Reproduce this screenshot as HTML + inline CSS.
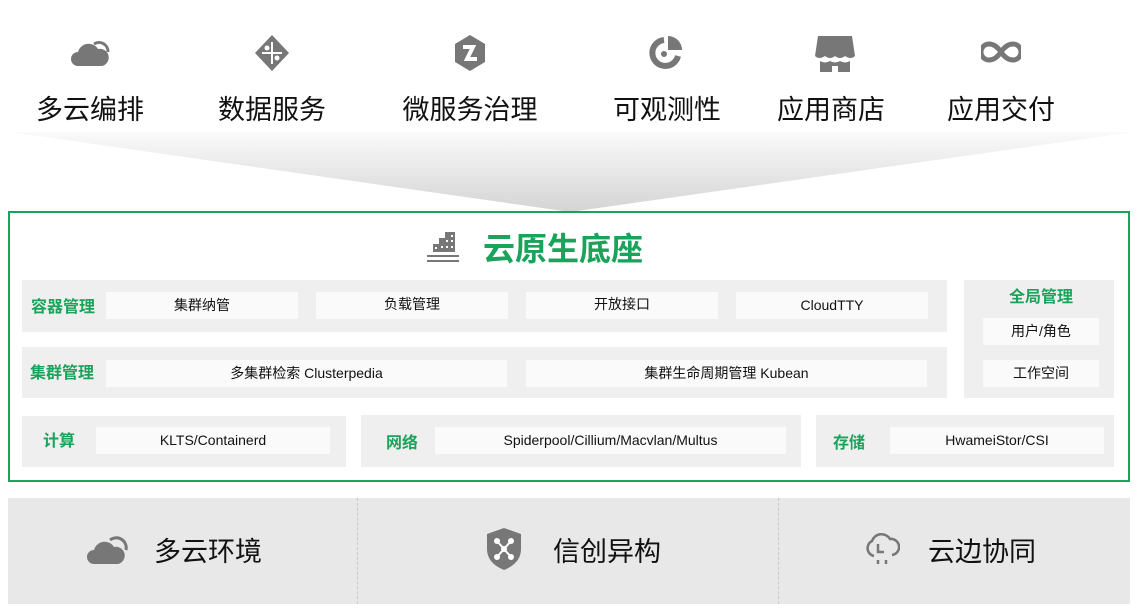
<!DOCTYPE html>
<html><head><meta charset="utf-8"><style>
*{margin:0;padding:0;box-sizing:border-box}
body{width:1143px;height:615px;background:#fff;position:relative;overflow:hidden;font-family:"Liberation Sans","Noto Sans CJK SC",sans-serif;color:#111}
.a{position:absolute}
.top{position:absolute;font-size:27px;top:88px;white-space:nowrap;transform:translateX(-50%)}
.ico{position:absolute;transform:translateX(-50%);top:34px}
.g{background:#efefef;position:absolute}
.c{background:#fafafa;position:absolute;font-size:14px;text-align:center;line-height:27px;height:27px;white-space:nowrap}
.gl{position:absolute;color:#1aa35a;font-weight:bold;font-size:16px;white-space:nowrap;line-height:20px}
.bt{position:absolute;font-size:27px;top:530px;white-space:nowrap}
</style></head><body>
<svg class="a" style="left:0;top:0" width="1143" height="215">
<defs><linearGradient id="f" x1="0" y1="0" x2="0" y2="1"><stop offset="0" stop-color="#fafafa"/><stop offset="1" stop-color="#d4d4d4"/></linearGradient></defs>
<polygon points="10,132 1133,132 570,212" fill="url(#f)"/>
</svg>
<svg class="ico" style="left:90px" width="40" height="36" viewBox="0 0 40 36"><path d="M8 32a7 7 0 0 1 0-14a11 11 0 0 1 20-3a8 8 0 0 1 4 17z" fill="#777"/><path d="M24 10a9 9 0 0 1 14 8" stroke="#777" stroke-width="3" fill="none"/></svg>
<svg class="ico" style="left:272px" width="36" height="38" viewBox="0 0 36 38"><path d="M18 1L35 19L18 37L1 19Z" fill="#777"/><path d="M18 8v22M8 19h20" stroke="#fff" stroke-width="2"/><circle cx="13" cy="14" r="2.5" fill="#fff"/><circle cx="23" cy="24" r="2.5" fill="#fff"/></svg>
<svg class="ico" style="left:470px" width="34" height="38" viewBox="0 0 34 38"><path d="M17 1L32 10V28L17 37L2 28V10Z" fill="#777"/><path d="M10 13h10l-6 12h10" stroke="#fff" stroke-width="4" fill="none"/></svg>
<svg class="ico" style="left:666px" width="36" height="38" viewBox="0 0 36 38"><path d="M16 6a13 13 0 1 0 14 16" stroke="#777" stroke-width="6" fill="none"/><path d="M20 2a14 14 0 0 1 14 14h-14z" fill="#777"/><circle cx="16" cy="20" r="3" fill="#777"/></svg>
<svg class="ico" style="left:835px" width="44" height="40" viewBox="0 0 44 40"><path d="M5 2h34l3 20q-4 4-10 0q-5 4-10 0q-5 4-10 0q-6 4-10 0z" fill="#777"/><path d="M7 27q5 3 10 0q5 3 10 0q5 3 10 0v11h-12v-6h-6v6h-12z" fill="#777"/></svg>
<svg class="ico" style="left:1001px;top:40px" width="40" height="24" viewBox="0 0 40 24"><path d="M20 12c-4-6-8-8-12-8a8 8 0 0 0 0 16c4 0 8-2 12-8s8-8 12-8a8 8 0 0 1 0 16c-4 0-8-2-12-8" stroke="#777" stroke-width="5" fill="none"/></svg>
<div class="top" style="left:90px">多云编排</div>
<div class="top" style="left:272px">数据服务</div>
<div class="top" style="left:470px">微服务治理</div>
<div class="top" style="left:667px">可观测性</div>
<div class="top" style="left:831px">应用商店</div>
<div class="top" style="left:1001px">应用交付</div>
<div class="a" style="left:8px;top:211px;width:1122px;height:271px;border:2px solid #1aa35a"></div>
<svg class="a" style="left:425px;top:230px" width="36" height="32" viewBox="0 0 36 32"><g fill="#777"><rect x="20" y="2" width="10" height="20"/><rect x="14" y="8" width="6" height="14"/><rect x="8" y="14" width="6" height="8"/></g><g fill="#fff"><rect x="16" y="16" width="2" height="2"/><rect x="21" y="16" width="2" height="2"/><rect x="26" y="16" width="2" height="2"/><rect x="21" y="10" width="2" height="2"/><rect x="26" y="10" width="2" height="2"/><rect x="26" y="5" width="2" height="2"/><rect x="10" y="17" width="2" height="2"/></g><rect x="2" y="25" width="32" height="2" fill="#777"/><rect x="2" y="30" width="32" height="2" fill="#777"/></svg>
<div class="a" style="left:483px;top:224px;font-size:32px;font-weight:bold;color:#1aa35a;white-space:nowrap">云原生底座</div>
<div class="g" style="left:22px;top:280px;width:925px;height:52px"></div>
<div class="gl" style="left:31px;top:298px">容器管理</div>
<div class="c" style="left:106px;top:292px;width:192px">集群纳管</div>
<div class="c" style="left:316px;top:292px;width:192px;line-height:24px">负载管理</div>
<div class="c" style="left:526px;top:292px;width:192px;line-height:24px">开放接口</div>
<div class="c" style="left:736px;top:292px;width:192px">CloudTTY</div>
<div class="g" style="left:22px;top:347px;width:925px;height:51px"></div>
<div class="gl" style="left:30px;top:364px">集群管理</div>
<div class="c" style="left:106px;top:360px;width:401px">多集群检索 Clusterpedia</div>
<div class="c" style="left:526px;top:360px;width:401px">集群生命周期管理 Kubean</div>
<div class="g" style="left:964px;top:280px;width:150px;height:118px"></div>
<div class="gl" style="left:1009px;top:288px">全局管理</div>
<div class="c" style="left:983px;top:318px;width:116px">用户/角色</div>
<div class="c" style="left:983px;top:360px;width:116px">工作空间</div>
<div class="g" style="left:22px;top:416px;width:324px;height:51px"></div>
<div class="gl" style="left:43px;top:432px">计算</div>
<div class="c" style="left:96px;top:427px;width:234px">KLTS/Containerd</div>
<div class="g" style="left:361px;top:415px;width:440px;height:52px"></div>
<div class="gl" style="left:386px;top:434px">网络</div>
<div class="c" style="left:435px;top:427px;width:351px">Spiderpool/Cillium/Macvlan/Multus</div>
<div class="g" style="left:816px;top:415px;width:298px;height:52px"></div>
<div class="gl" style="left:833px;top:434px">存储</div>
<div class="c" style="left:890px;top:427px;width:214px">HwameiStor/CSI</div>
<div class="a" style="left:8px;top:498px;width:1122px;height:106px;background:#e8e8e8"></div>
<div class="a" style="left:357px;top:498px;height:106px;border-left:1px dashed #c8c8d0"></div>
<div class="a" style="left:778px;top:498px;height:106px;border-left:1px dashed #c8c8d0"></div>
<svg class="a" style="left:86px;top:532px" width="42" height="34" viewBox="0 0 42 34"><path d="M8 32a7 7 0 0 1 0-14a11 11 0 0 1 20-3a8 8 0 0 1 4 17z" fill="#777"/><path d="M24 8a10 10 0 0 1 16 10" stroke="#777" stroke-width="3" fill="none"/></svg>
<svg class="a" style="left:485px;top:527px" width="38" height="44" viewBox="0 0 38 44"><path d="M19 1L36 7V22Q36 36 19 43Q2 36 2 22V7Z" fill="#777"/><path d="M12 14L26 30M26 14L12 30" stroke="#fff" stroke-width="2"/><g fill="#fff"><circle cx="12" cy="14" r="3"/><circle cx="26" cy="14" r="3"/><circle cx="12" cy="30" r="3"/><circle cx="26" cy="30" r="3"/><circle cx="19" cy="22" r="3"/></g></svg>
<svg class="a" style="left:862px;top:530px" width="38" height="38" viewBox="0 0 38 38"><path d="M12 26a8 8 0 0 1-2-15a10 10 0 0 1 18-2a8 8 0 0 1 2 16M16 14v8h6M16 30v4M24 30v4" stroke="#777" stroke-width="2.5" fill="none"/></svg>
<div class="bt" style="left:154px">多云环境</div>
<div class="bt" style="left:553px">信创异构</div>
<div class="bt" style="left:928px">云边协同</div>
</body></html>
